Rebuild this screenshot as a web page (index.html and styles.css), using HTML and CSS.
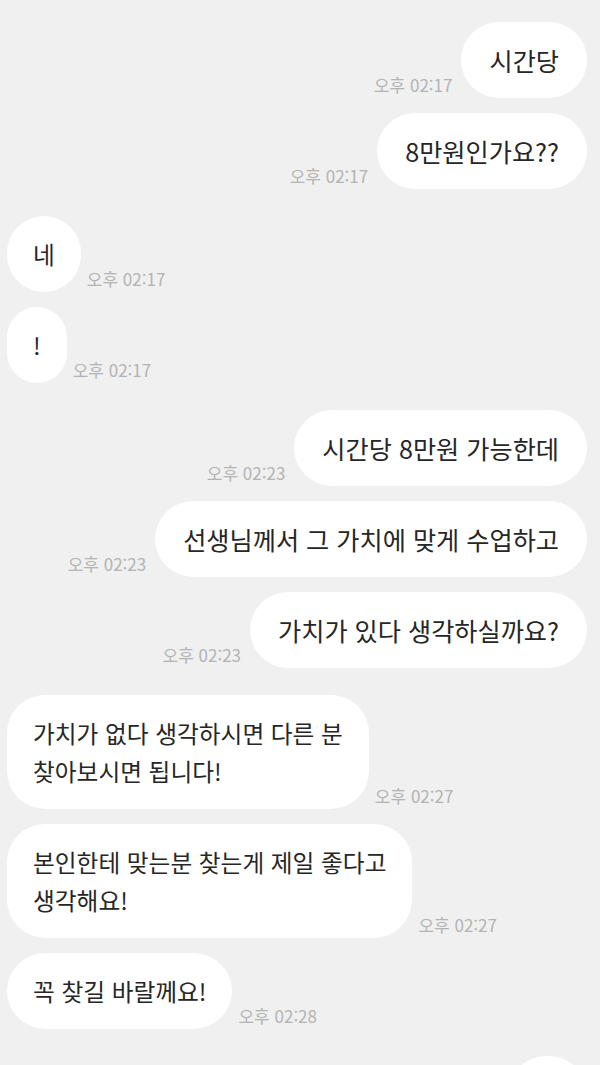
FILE: index.html
```html
<!doctype html>
<html lang="ko">
<head>
  <meta charset="UTF-8">
  <meta name="viewport" content="width=device-width, initial-scale=1.0">
  <title>채팅</title>
  <link rel="stylesheet" href="styles.css">
</head>
<body>
  <div class="chat">
    <div class="row mine">
      <span class="time">오후 02:17</span>
      <div class="bubble">시간당</div>
    </div>
    <div class="row mine next">
      <span class="time">오후 02:17</span>
      <div class="bubble">8만원인가요??</div>
    </div>

    <div class="row theirs">
      <div class="bubble">네</div>
      <span class="time">오후 02:17</span>
    </div>
    <div class="row theirs next">
      <div class="bubble">!</div>
      <span class="time">오후 02:17</span>
    </div>

    <div class="row mine">
      <span class="time">오후 02:23</span>
      <div class="bubble">시간당 8만원 가능한데</div>
    </div>
    <div class="row mine next">
      <span class="time">오후 02:23</span>
      <div class="bubble">선생님께서 그 가치에 맞게 수업하고</div>
    </div>
    <div class="row mine next">
      <span class="time">오후 02:23</span>
      <div class="bubble">가치가 있다 생각하실까요?</div>
    </div>

    <div class="row theirs">
      <div class="bubble">가치가 없다 생각하시면 다른 분<br>찾아보시면 됩니다!</div>
      <span class="time">오후 02:27</span>
    </div>
    <div class="row theirs next">
      <div class="bubble">본인한테 맞는분 찾는게 제일 좋다고<br>생각해요!</div>
      <span class="time">오후 02:27</span>
    </div>
    <div class="row theirs next">
      <div class="bubble">꼭 찾길 바랄께요!</div>
      <span class="time">오후 02:28</span>
    </div>

    <!-- next message, only its top edge shows -->
    <div class="row mine">
      <div class="bubble partial"></div>
    </div>
  </div>
</body>
</html>
```

FILE: styles.css
```css
body {
  margin: 0;
  background: #f0f0f0;
  font-family: "Noto Sans CJK KR", "Noto Sans", sans-serif;
  overflow: hidden;
}
.chat {
  display: flex;
  flex-direction: column;
  padding: 22px 13px 0 7px;
}
.row {
  display: flex;
  align-items: flex-end;
  margin-top: 27px;
}
.row:first-child {
  margin-top: 0;
}
.row.next {
  margin-top: 15px;
}
.mine {
  justify-content: flex-end;
  gap: 9px;
}
.theirs {
  justify-content: flex-start;
  gap: 6px;
}
.bubble {
  background: #ffffff;
  color: #262626;
  font-size: 25.2px;
  line-height: 38px;
  padding: 19px 28px;
  border-radius: 38px;
  white-space: nowrap;
}
.theirs .bubble {
  font-size: 23.7px;
  padding: 19px 26px;
}
.bubble.partial {
  width: 23px;
  height: 38px;
}
.time {
  color: #b3b3b3;
  font-size: 17px;
  line-height: 20px;
  padding-bottom: 3px;
  white-space: nowrap;
}
```
